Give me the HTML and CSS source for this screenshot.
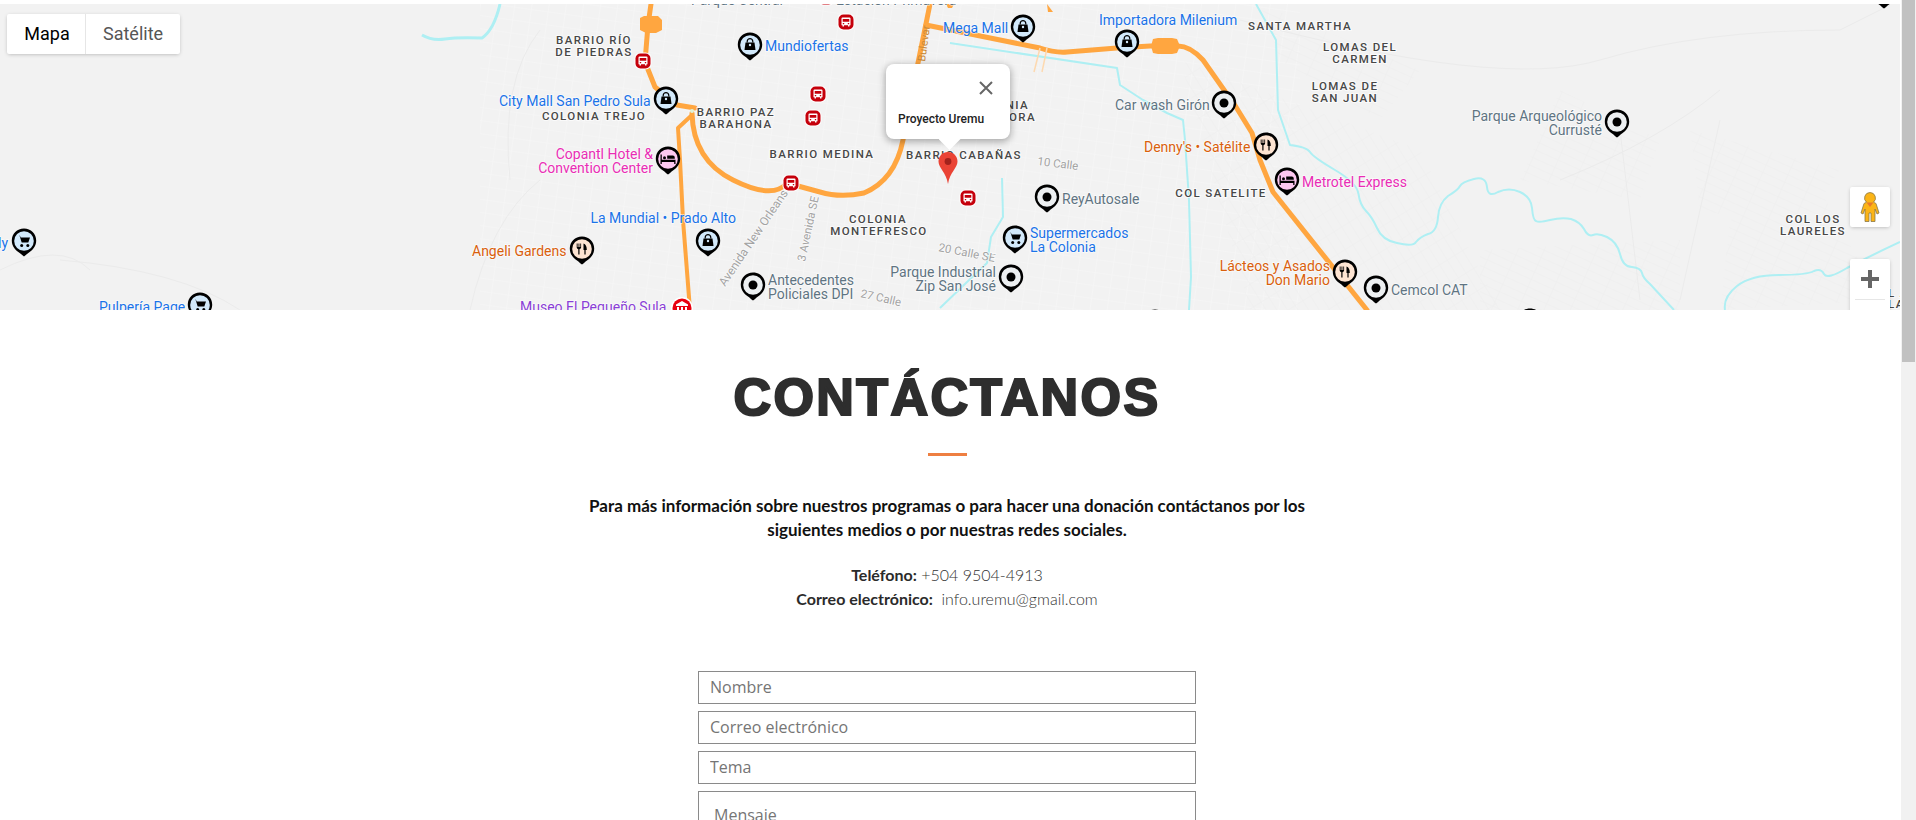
FILE: index.html
```html
<!DOCTYPE html>
<html lang="es">
<head>
<meta charset="utf-8">
<title>Contáctanos</title>
<link rel="stylesheet" href="styles.css">
</head>
<body>
<section class="map">
<svg class="map-canvas" viewBox="0 4 1900 306" width="1900" height="306" xmlns="http://www.w3.org/2000/svg">
<defs>
<pattern id="gridA" width="17" height="13" patternUnits="userSpaceOnUse" patternTransform="rotate(8)"><path d="M0 0H17M0 0V13" class="st-light"/></pattern>
<pattern id="gridB" width="9" height="21" patternUnits="userSpaceOnUse" patternTransform="rotate(-32)"><path d="M0 0H9M0 0V21" class="st-dark"/></pattern>
<pattern id="gridC" width="24" height="8" patternUnits="userSpaceOnUse" patternTransform="rotate(24)"><path d="M0 0H24M0 0V8" class="st-dark"/></pattern>
<symbol id="pin" overflow="visible"><path d="M0-12.500C7-12.500 12.200-7.200 12.200-.5 12.200 5.500 8.500 9 5 11.500 3 13 1.500 14.500 0 15.500-1.500 14.500-3 13-5 11.500-8.500 9-12.200 5.500-12.200-.5-12.200-7.200-7-12.500 0-12.500Z"/></symbol>
<g id="g-bag"><path d="M-2.800-2.500V-3.500A2.800 2.800 0 0 1 2.800-3.500V-2.500" class="glyph-line"/><path d="M-4.500-2.500H4.500L5.500 5H-5.500Z"/><circle cx="0" cy="0" r="1.200" class="glyph-hole"/></g>
<g id="g-cart"><path d="M-6.500-5.500H-4.200L-3.300-3.500H6L4.300 1.500H-2.300L-4.500-5.500" /><circle cx="-2.300" cy="4.500" r="1.500"/><circle cx="3.800" cy="4.500" r="1.500"/></g>
<g id="g-food"><path d="M-5.300-5.500V-1.500Q-5.300-.2-3.700.2V5.500H-2.500V.2Q-.9-.2-.9-1.500V-5.500H-1.700V-2H-2.600V-5.500H-3.500V-2H-4.400V-5.500Z"/><path d="M1.500-5.500C3.800-5 4.800-2.500 4.800 1H3.600V5.500H2.400V1H1.500Z"/></g>
<g id="g-bed"><path d="M-7.500-4.500H-6.200V.8H7.500V5H6.200V3H-6.200V5H-7.500Z"/><circle cx="-3.500" cy="-1.300" r="1.500"/><path d="M-.8-3.500H4.800Q6.800-3.500 6.800-1.300V-.2H-.8Z"/></g>
<symbol id="bus" overflow="visible"><rect x="-8.500" y="-8.500" width="17" height="17" rx="6" class="bus-rim"/><rect x="-7.500" y="-7.500" width="15" height="15" rx="5" class="bus-bg"/><path d="M-3.500-4.500H3.500Q4.500-4.500 4.500-3.500V3.200H3.500V4.500H2V3.200H-2V4.500H-3.500V3.200H-4.500V-3.500Q-4.500-4.500-3.500-4.500ZM-3.300-3V-.3H3.300V-3ZM-3.200 1V2.200H-1.800V1ZM1.800 1V2.200H3.200V1Z" class="bus-fg" fill-rule="evenodd"/></symbol>
</defs>

<rect x="0" y="4" width="1900" height="306" class="land"/>
<path d="M480 4H1300V310H480Z" fill="url(#gridA)"/>
<path d="M1180 60L1420 150L1500 310H1250Z" fill="url(#gridB)"/>
<path d="M1560 90L1660 140L1640 200L1520 180ZM1690 130L1840 170L1800 230L1700 210ZM1480 250L1680 240L1680 310H1480ZM1730 220L1820 190L1880 300L1720 310ZM1260 4L1420 70L1380 120L1280 60Z" fill="url(#gridC)"/>
<path d="M1240 20Q1500 90 1600 60T1840 30L1890 5M1560 180Q1660 140 1720 90M1620 130L1640 300M1720 120L1680 300M60 260Q180 270 240 310M0 270Q60 240 90 270M470 310Q490 220 540 180M540 30Q500 80 510 180" class="st-free"/>

<path d="M422 35Q432 41 445 39T482 38Q494 30 500 4" class="river river-thick"/>
<path d="M950 43L1117 68L1120 85L1143 100L1167 113L1183 120L1185 140L1189 200L1191 277L1189 310" class="river"/>
<path d="M1256 4L1276 40L1278 110L1290 145Q1307 147 1310 152Q1313 157 1335 170Q1357 183 1358.500 194Q1360 205 1366 211Q1372 217 1377 228Q1382 240 1397 243Q1413 247 1416 242Q1420 237 1428 234Q1437 232 1438 217Q1439 203 1448 196Q1458 190 1460 186Q1462 182 1474 179Q1486 176 1487 187Q1488 198 1498 192Q1509 187 1520 192Q1531 197 1532 208Q1533 220 1536 221Q1539 223 1550 220Q1562 217 1571 219Q1580 222 1584 229Q1588 237 1593 235Q1598 233 1607 237Q1617 242 1620 254Q1623 267 1632 267Q1641 268 1642 273Q1643 278 1650 284L1674 310" class="river"/>
<path d="M1725 310Q1723 297 1737 286Q1751 275 1779 275Q1807 275 1814 271Q1821 268 1824 274Q1827 280 1847 268Q1868 257 1900 242" class="river"/>
<path d="M1002 178L1003 217L991 237L987 263L966 283L940 308" class="river"/>

<path d="M651 4L648 25L645 62L655 87L677 105L695 108" class="road"/>
<path d="M692 113Q693 160 733 180T787 183L820 192Q840 198 864 193Q895 180 903 140L918 63L930 4" class="road"/>
<path d="M692 115L678 128L680 160L683 220L690 310" class="road road-thin"/>
<path d="M926 25L1000 40L1040 48Q1055 53 1067 52L1117 48L1150 46H1178Q1190 46 1203 60L1236 107L1252 133L1260 160L1273 192L1367 310" class="road"/>
<path d="M1040 48L1034 72M1047 48L1042 72" class="road-thin-faint"/>
<path d="M640 18L644 16H658L662 20V30L656 33H646L640 30Z" class="shield"/>
<path d="M1153 39L1158 38H1172L1177 39L1180 46L1177 53L1172 54H1158L1153 53L1151 46Z" class="shield"/>
<path d="M946 4H954L952 8H948ZM1047 4L1053 12H1048Z" class="shield"/>
<circle cx="692" cy="111" r="2" class="node"/>

<text class="road-label" transform="translate(925 62) rotate(-82)">Bulevar</text>
<text class="street" transform="translate(1037 165) rotate(7)">10 Calle</text>
<text class="street" transform="translate(938 251) rotate(11)">20 Calle SE</text>
<text class="street" transform="translate(860 297) rotate(13)">27 Calle</text>
<text class="street street-long" transform="translate(725 287) rotate(-56)">Avenida New Orleans</text>
<text class="street" transform="translate(805 262) rotate(-78)">3 Avenida SE</text>

<text class="area mid" x="594" y="44">BARRIO RÍO</text>
<text class="area mid" x="594" y="56">DE PIEDRAS</text>
<text class="area mid" x="594" y="120">COLONIA TREJO</text>
<text class="area mid" x="736" y="116">BARRIO PAZ</text>
<text class="area mid" x="736" y="128">BARAHONA</text>
<text class="area mid" x="822" y="158">BARRIO MEDINA</text>
<text class="area mid" x="964" y="159">BARRIO CABAÑAS</text>
<text class="area mid" x="878" y="223">COLONIA</text>
<text class="area mid" x="879" y="235">MONTEFRESCO</text>
<text class="area end" x="1029" y="109">COLONIA</text>
<text class="area end" x="1036" y="121">AURORA</text>
<text class="area mid" x="1221" y="197">COL SATELITE</text>
<text class="area mid" x="1300" y="30">SANTA MARTHA</text>
<text class="area mid" x="1360" y="51">LOMAS DEL</text>
<text class="area mid" x="1360" y="63">CARMEN</text>
<text class="area mid" x="1345" y="90">LOMAS DE</text>
<text class="area mid" x="1345" y="102">SAN JUAN</text>
<text class="area mid" x="1813" y="223">COL LOS</text>
<text class="area mid" x="1813" y="235">LAURELES</text>
<text class="area" x="1888" y="297">L A</text>
<text class="area" x="1888" y="308">LA</text>

<text class="poi grey" x="691" y="5">Parque Central</text>
<text class="poi grey" x="836" y="5">Estación Primavera</text>
<text class="poi blue" x="765" y="51">Mundiofertas</text>
<text class="poi blue" x="943" y="33">Mega Mall</text>
<text class="poi blue" x="1099" y="25">Importadora Milenium</text>
<text class="poi grey" x="1115" y="110">Car wash Girón</text>
<text class="poi orange" x="1144" y="152">Denny's • Satélite</text>
<text class="poi grey" x="1062" y="204">ReyAutosale</text>
<text class="poi blue" x="1030" y="238">Supermercados</text>
<text class="poi blue" x="1030" y="252">La Colonia</text>
<text class="poi grey end" x="996" y="277">Parque Industrial</text>
<text class="poi grey end" x="996" y="291">Zip San José</text>
<text class="poi grey" x="768" y="285">Antecedentes</text>
<text class="poi grey" x="768" y="299">Policiales DPI</text>
<text class="poi blue end" x="736" y="223">La Mundial • Prado Alto</text>
<text class="poi blue" x="499" y="106">City Mall San Pedro Sula</text>
<text class="poi pink end" x="653" y="159">Copantl Hotel &amp;</text>
<text class="poi pink end" x="653" y="173">Convention Center</text>
<text class="poi orange" x="472" y="256">Angeli Gardens</text>
<text class="poi blue" x="99" y="312">Pulpería Page</text>
<text class="poi purple" x="520" y="312">Museo El Pequeño Sula</text>
<text class="poi blue end" x="8" y="248">Pulpería Candy</text>
<text class="poi pink" x="1302" y="187">Metrotel Express</text>
<text class="poi orange end" x="1330" y="271">Lácteos y Asados</text>
<text class="poi orange end" x="1330" y="285">Don Mario</text>
<text class="poi grey" x="1391" y="295">Cemcol CAT</text>
<text class="poi grey end" x="1602" y="121">Parque Arqueológico</text>
<text class="poi grey end" x="1602" y="135">Currusté</text>

<g class="pin-g"><use href="#pin" x="24" y="241"/><circle cx="24" cy="241" r="9.800" class="t-shop"/><use href="#g-cart" x="24" y="241"/></g>
<g class="pin-g"><use href="#pin" x="200" y="305"/><circle cx="200" cy="305" r="9.800" class="t-shop"/><use href="#g-cart" x="200" y="305"/></g>
<g class="pin-g"><use href="#pin" x="1015" y="238"/><circle cx="1015" cy="238" r="9.800" class="t-shop"/><use href="#g-cart" x="1015" y="238"/></g>
<g class="pin-g"><use href="#pin" x="750" y="45"/><circle cx="750" cy="45" r="9.800" class="t-shop"/><use href="#g-bag" x="750" y="45"/></g>
<g class="pin-g"><use href="#pin" x="666" y="99"/><circle cx="666" cy="99" r="9.800" class="t-shop"/><use href="#g-bag" x="666" y="99"/></g>
<g class="pin-g"><use href="#pin" x="708" y="241"/><circle cx="708" cy="241" r="9.800" class="t-shop"/><use href="#g-bag" x="708" y="241"/></g>
<g class="pin-g"><use href="#pin" x="1023" y="27"/><circle cx="1023" cy="27" r="9.800" class="t-shop"/><use href="#g-bag" x="1023" y="27"/></g>
<g class="pin-g"><use href="#pin" x="1127" y="42"/><circle cx="1127" cy="42" r="9.800" class="t-shop"/><use href="#g-bag" x="1127" y="42"/></g>
<g class="pin-g"><use href="#pin" x="582" y="249"/><circle cx="582" cy="249" r="9.800" class="t-food"/><use href="#g-food" x="582" y="249"/></g>
<g class="pin-g"><use href="#pin" x="1266" y="145"/><circle cx="1266" cy="145" r="9.800" class="t-food"/><use href="#g-food" x="1266" y="145"/></g>
<g class="pin-g"><use href="#pin" x="1345" y="272"/><circle cx="1345" cy="272" r="9.800" class="t-food"/><use href="#g-food" x="1345" y="272"/></g>
<g class="pin-g"><use href="#pin" x="668" y="159"/><circle cx="668" cy="159" r="9.800" class="t-bed"/><use href="#g-bed" x="668" y="159"/></g>
<g class="pin-g"><use href="#pin" x="1287" y="180"/><circle cx="1287" cy="180" r="9.800" class="t-bed"/><use href="#g-bed" x="1287" y="180"/></g>
<g class="pin-g"><use href="#pin" x="1530" y="321"/><circle cx="1530" cy="321" r="9.800" class="t-bed"/></g>
<g class="pin-g"><use href="#pin" x="753" y="285"/><circle cx="753" cy="285" r="9.800" class="t-dot"/><circle cx="753" cy="285" r="4.500"/></g>
<g class="pin-g"><use href="#pin" x="1224" y="103"/><circle cx="1224" cy="103" r="9.800" class="t-dot"/><circle cx="1224" cy="103" r="4.500"/></g>
<g class="pin-g"><use href="#pin" x="1047" y="197"/><circle cx="1047" cy="197" r="9.800" class="t-dot"/><circle cx="1047" cy="197" r="4.500"/></g>
<g class="pin-g"><use href="#pin" x="1011" y="277"/><circle cx="1011" cy="277" r="9.800" class="t-dot"/><circle cx="1011" cy="277" r="4.500"/></g>
<g class="pin-g"><use href="#pin" x="1155" y="322"/><circle cx="1155" cy="322" r="9.800" class="t-dot"/><circle cx="1155" cy="322" r="4.500"/></g>
<g class="pin-g"><use href="#pin" x="1376" y="288"/><circle cx="1376" cy="288" r="9.800" class="t-dot"/><circle cx="1376" cy="288" r="4.500"/></g>
<g class="pin-g"><use href="#pin" x="1617" y="122"/><circle cx="1617" cy="122" r="9.800" class="t-dot"/><circle cx="1617" cy="122" r="4.500"/></g>
<g class="pin-g"><use href="#pin" x="1884" y="-7"/></g>

<use href="#bus" x="846" y="22"/>
<use href="#bus" x="818" y="94"/>
<use href="#bus" x="813" y="118"/>
<use href="#bus" x="791" y="183"/>
<use href="#bus" x="968" y="198"/>
<use href="#bus" x="643" y="61"/>
<use href="#bus" x="826" y="-3"/>

<circle cx="682" cy="308" r="11" class="museum-rim"/>
<circle cx="682" cy="308" r="9.500" class="museum"/>
<path d="M682 301L688 304.500V306H676V304.500ZM677 307H679V312H677ZM681 307H683V312H681ZM685 307H687V312H685Z" class="bus-rim"/>
</svg>

<div class="layer-switch">
  <button class="layer active" type="button">Mapa</button>
  <button class="layer" type="button">Satélite</button>
</div>

<div class="popup">
  <span class="popup-x" aria-label="Cerrar">
    <svg viewBox="0 0 14 14" width="14" height="14" xmlns="http://www.w3.org/2000/svg"><path d="M1 1L13 13M13 1L1 13" class="x-line"/></svg>
  </span>
  <strong class="popup-title">Proyecto Uremu</strong>
</div>

<svg class="marker" viewBox="0 0 20 32" width="20" height="32" xmlns="http://www.w3.org/2000/svg">
  <path d="M10 0C15.500 0 19.500 4.200 19.500 9.500 19.500 16 12 20 10 32 8 20 .5 16 .5 9.500.5 4.200 4.500 0 10 0Z" class="marker-body"/>
  <circle cx="10" cy="9.500" r="3.400" class="marker-dot"/>
</svg>

<button class="ctrl pegman" type="button" aria-label="Street View">
  <svg viewBox="0 0 20 30" width="20" height="30" xmlns="http://www.w3.org/2000/svg">
    <path d="M10 .5A5.500 5.500 0 0 1 13.500 10.200L16 11.500 19 21 17 22 15 17V29.500H11V21H9V29.500H5V17L3 22 1 21 4 11.500 6.500 10.200A5.500 5.500 0 0 1 10 .5Z" class="peg-body"/>
    <path d="M6.500 10.500H13.500L10 15Z" class="peg-scarf"/>
  </svg>
</button>

<div class="ctrl zoom-box">
  <button class="zoom-btn" type="button" aria-label="Acercar">
    <svg viewBox="0 0 18 18" width="18" height="18" xmlns="http://www.w3.org/2000/svg"><path d="M7 0H11V7H18V11H11V18H7V11H0V7H7Z" class="plus"/></svg>
  </button>
  <hr class="zoom-sep">
  <button class="zoom-btn" type="button" aria-label="Alejar"></button>
</div>
</section>

<main class="contact">
  <h1 class="title">CONTÁCTANOS</h1>
  <div class="bar"></div>
  <p class="lead">Para más información sobre nuestros programas o para hacer una donación contáctanos por los siguientes medios o por nuestras redes sociales.</p>
  <p class="info"><b>Teléfono:</b> +504 9504-4913<br><b>Correo electrónico:</b>&nbsp; info.uremu@gmail.com</p>
  <form class="form">
    <input class="field" type="text" placeholder="Nombre">
    <input class="field" type="email" placeholder="Correo electrónico">
    <input class="field" type="text" placeholder="Tema">
    <textarea class="field area-field" placeholder="Mensaje"></textarea>
  </form>
</main>

<div class="rail" aria-hidden="true"><div class="rail-thumb"></div></div>
</body>
</html>
```
FILE: styles.css
```css
html { background: #fff; scrollbar-width: none; }

body { margin: 0; padding-top: 4px; width: 1901px; height: 1853px; font-family: "Lato", sans-serif; color: #000; background: #fff; }

.rail { position: fixed; top: 0; right: 0; bottom: 0; width: 15px; background: #f1f1f1; }
.rail-thumb { height: 362px; margin: 0 1px; background: #c1c1c1; }

.map { position: relative; height: 306px; width: 1900px; overflow: hidden; background: #f2f2f2; }
.map-canvas { display: block; font-family: "Roboto", sans-serif; }
.land { fill: #f2f2f2; }
.st-light { fill: none; stroke: #f7f7f7; stroke-width: 1.2; }
.st-dark { fill: none; stroke: #ededed; stroke-width: 1; }
.st-free { fill: none; stroke: #ebebeb; stroke-width: 1; }

.river { fill: none; stroke: #aeeff3; stroke-width: 2; stroke-linejoin: round; }
.river-thick { stroke-width: 3; }
.road { fill: none; stroke: #ffa640; stroke-width: 5; stroke-linejoin: round; stroke-linecap: round; }
.road-thin { stroke-width: 4; }
.road-thin-faint { fill: none; stroke: #fdd9b0; stroke-width: 1.500; }
.shield { fill: #ffa640; }
.node { fill: #dff3d8; }

.area { font-size: 11.500px; font-weight: 500; letter-spacing: 1.400px; fill: #474747; stroke: #fff; stroke-width: 2px; stroke-opacity: .7; paint-order: stroke; }
.poi { font-size: 14px; paint-order: stroke; stroke: #fff; stroke-width: 1.500px; stroke-opacity: .7; }
.mid { text-anchor: middle; }
.end { text-anchor: end; }
.blue { fill: #1a73e8; }
.grey { fill: #5f7482; }
.orange { fill: #d9600c; }
.pink { fill: #e92db5; }
.purple { fill: #8a3ed6; }
.street { font-size: 11.500px; fill: #a3a3a3; paint-order: stroke; stroke: #fff; stroke-width: 1.500px; stroke-opacity: .6; }
.street-long { font-size: 12px; }
.road-label { font-size: 11px; fill: #c98a3a; }

.pin-g { fill: #000; }
.t-shop { fill: #d2e9fb; }
.t-food { fill: #fde4d2; }
.t-bed { fill: #fcc8f0; }
.t-dot { fill: #eceff1; }
.glyph-line { fill: none; stroke: #000; stroke-width: 1.200; }
.glyph-hole { fill: #d2e9fb; }
.bus-rim { fill: #fff; }
.bus-bg { fill: #c5000b; }
.bus-fg { fill: #fff; }
.museum-rim { fill: #fff; }
.museum { fill: #e8000f; }

.layer-switch { position: absolute; left: 7px; top: 10px; height: 40px; display: flex; background: #fff; border-radius: 2px; box-shadow: 0 1px 4px -1px rgba(0,0,0,.3); }
.layer { border: 0; background: none; padding: 0 17px 2px; font: 18px "Roboto", sans-serif; color: #565656; cursor: pointer; }
.layer.active { color: #000; width: 79px; border-right: 1px solid #e6e6e6; box-sizing: border-box; padding: 0 0 2px 2px; }

.popup { position: absolute; left: 886px; top: 60px; width: 124px; height: 75px; box-sizing: border-box; padding: 0 12px; background: #fff; border-radius: 8px; box-shadow: 0 2px 7px 1px rgba(0,0,0,.3); display: flex; flex-direction: column; }
.popup::after { content: ""; position: absolute; left: 50%; bottom: -11px; width: 22px; height: 22px; margin-left: -9.500px; background: #fff; clip-path: polygon(0 50%, 100% 50%, 50% 100%); }
.popup-x { align-self: flex-end; margin: 17px 5px 0 0; height: 14px; }
.popup-x svg { display: block; }
.x-line { fill: none; stroke: #666; stroke-width: 2; }
.popup-title { margin-top: 17px; font: 500 12px/14px "Roboto", sans-serif; color: #222; white-space: nowrap; }

.marker { position: absolute; left: 938px; top: 148px; }
.marker-body { fill: #ea4335; }
.marker-dot { fill: #a3221c; }

.ctrl { position: absolute; left: 1850px; width: 40px; background: #fff; border-radius: 2px; box-shadow: 0 1px 4px -1px rgba(0,0,0,.3); border: 0; padding: 0; }
.pegman { top: 183px; height: 40px; display: flex; align-items: center; justify-content: center; }
.peg-body { fill: #fbb417; stroke: #8a7a4a; stroke-width: .8; }
.peg-scarf { fill: #e8792b; }

.zoom-box { top: 255px; height: 81px; display: flex; flex-direction: column; }
.zoom-btn { height: 40px; border: 0; background: none; padding: 0; display: flex; align-items: center; justify-content: center; }
.plus { fill: #666; }
.zoom-sep { margin: 0 5px; border: 0; height: 1px; background: #e6e6e6; }

.contact { display: flex; flex-direction: column; align-items: center; padding-right: 7px; }
.title { margin: 57px 0 0; font: 700 52px/60px "Liberation Sans", sans-serif; letter-spacing: 2.400px; color: #2e2e2e; -webkit-text-stroke: 2.200px #2e2e2e; }
.bar { width: 39px; height: 3px; margin-top: 26px; background: #ee7f41; }
.lead { width: 740px; margin: 38px 0 0; font-weight: 700; font-size: 17px; line-height: 24px; text-align: center; color: #111; }
.info { margin: 21px 0 0; font-weight: 300; font-size: 16px; line-height: 24px; text-align: center; color: #333; }
.info b { font-weight: 700; font-size: 16px; color: #2b2b2b; }
.form { width: 498px; margin-top: 60px; display: flex; flex-direction: column; gap: 7px; }
.field { box-sizing: border-box; width: 100%; height: 33px; margin: 0; padding: 0 11px 2px; border: 1px solid #8a8a8a; border-radius: 0; background: #fff; font: 16px "Open Sans", sans-serif; outline: 0; }
.field::placeholder { color: #757575; opacity: 1; }
.area-field { height: 150px; padding: 12px 15px; resize: none; }
```
